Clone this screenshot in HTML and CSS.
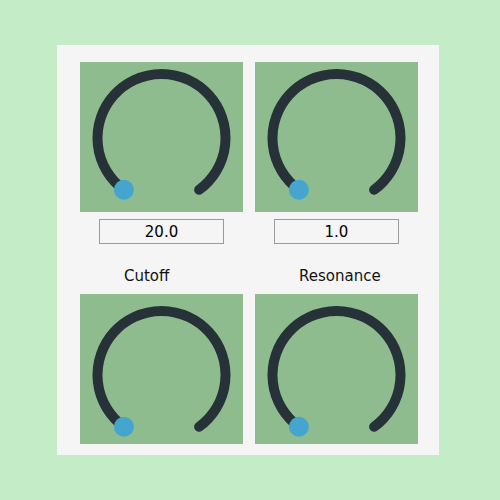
FILE: index.html
```html
<!DOCTYPE html>
<html lang="en">

<head>
  <meta charset="UTF-8">
  <meta name="viewport" content="width=device-width, initial-scale=1.0">
  <title>Filter</title>
  <link rel="stylesheet" href="styles.css">
</head>

<body>
  <div class="panel">
    <div class="grid">
      <div class="knob">
        <svg viewBox="0 0 163 150" width="163" height="150">
          <path class="track" d="M 43.9 127.8 A 64 64 0 1 1 119.1 127.8" />
          <circle class="handle" cx="43.9" cy="127.8" r="10" />
        </svg>
      </div>
      <div class="knob">
        <svg viewBox="0 0 163 150" width="163" height="150">
          <path class="track" d="M 43.9 127.8 A 64 64 0 1 1 119.1 127.8" />
          <circle class="handle" cx="43.9" cy="127.8" r="10" />
        </svg>
      </div>

      <div class="field"><input type="text" value="20.0"></div>
      <div class="field"><input type="text" value="1.0"></div>

      <div class="label">Cutoff</div>
      <div class="label">Resonance</div>

      <!-- second row sits a little lower inside its box -->
      <div class="knob">
        <svg viewBox="0 -5 163 150" width="163" height="150">
          <path class="track" d="M 43.9 127.8 A 64 64 0 1 1 119.1 127.8" />
          <circle class="handle" cx="43.9" cy="127.8" r="10" />
        </svg>
      </div>
      <div class="knob">
        <svg viewBox="0 -5 163 150" width="163" height="150">
          <path class="track" d="M 43.9 127.8 A 64 64 0 1 1 119.1 127.8" />
          <circle class="handle" cx="43.9" cy="127.8" r="10" />
        </svg>
      </div>
    </div>
  </div>
</body>

</html>
```

FILE: styles.css
```css
body {
  font-family: "DejaVu Sans", sans-serif;
  margin: 0;
  padding: 0;
  background-color: #c4ecc6;
  width: 500px;
  height: 500px;
}

.panel {
  margin: 45px 0 0 57px;
  width: 382px;
  height: 410px;
  box-sizing: border-box;
  padding: 17px 21px 11px 23px;
  background-color: #f5f5f5;
}

.grid {
  display: grid;
  grid-template-columns: 163px 163px;
  column-gap: 12px;
}

.knob {
  width: 163px;
  height: 150px;
  overflow: hidden;
  background-color: #8fbc8f;
}

.knob svg {
  display: block;
}

.track {
  fill: none;
  stroke: #263238;
  stroke-width: 10;
  stroke-linecap: round;
}

.handle {
  fill: #45a5cf;
}

.field {
  display: flex;
  justify-content: center;
  margin-top: 7px;
}

input[type="text"] {
  width: 125px;
  height: 25px;
  box-sizing: border-box;
  border: 1px solid #9a9a9a;
  background: transparent;
  font-family: "DejaVu Sans", sans-serif;
  font-size: 15px;
  color: #000;
  text-align: center;
  padding: 0;
}

.label {
  margin-top: 23px;
  margin-bottom: 8px;
  padding-left: 44px;
  font-size: 15px;
  line-height: 19px;
  color: #111;
}
```
